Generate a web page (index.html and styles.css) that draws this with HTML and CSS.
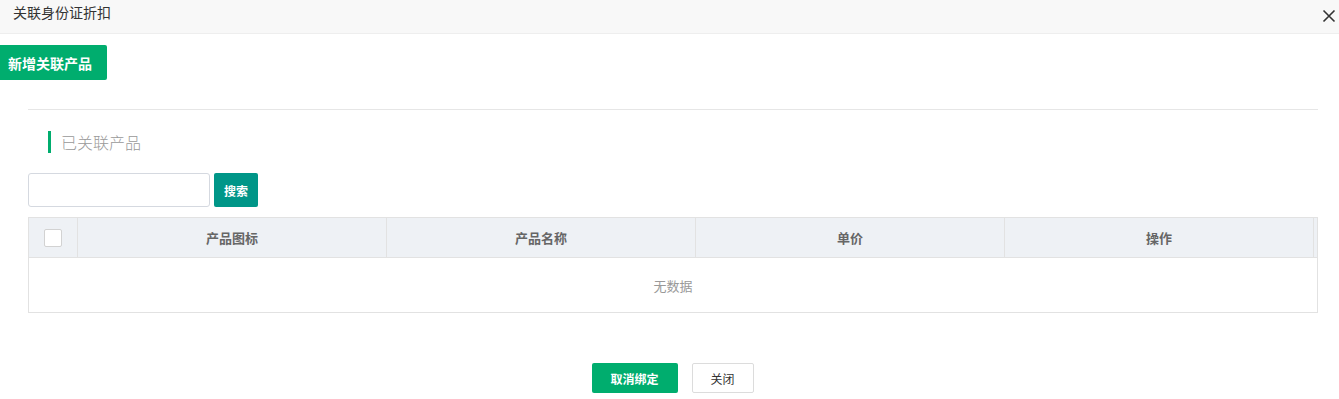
FILE: index.html
```html
<!DOCTYPE html>
<html>
<head>
    <link rel="stylesheet" href="styles.css">
</head>
<body>
    <div class="dialog">
        <div class="dialog-head">
            <span class="dialog-title">关联身份证折扣</span>
            <span class="dialog-close">
                <svg width="14" height="14" viewBox="0 0 14 14"><path d="M1.5 1.5L12.5 12.5M12.5 1.5L1.5 12.5" stroke="#333" stroke-width="1.6" fill="none"/></svg>
            </span>
        </div>

        <div class="dialog-body">
            <button class="btn-add">新增关联产品</button>

            <div class="content">
                <hr class="divider">
                <div class="section-title">已关联产品</div>

                <div class="search-bar">
                    <input type="text" class="search-input">
                    <button class="btn-search">搜索</button>
                </div>

                <div class="table">
                    <div class="table-head">
                        <div class="cell cell-check"><span class="checkbox"></span></div>
                        <div class="cell">产品图标</div>
                        <div class="cell">产品名称</div>
                        <div class="cell">单价</div>
                        <div class="cell">操作</div>
                        <div class="cell-gutter"></div>
                    </div>
                    <div class="table-empty">无数据</div>
                </div>
            </div>

            <div class="footer">
                <button class="btn-unbind">取消绑定</button>
                <button class="btn-close">关闭</button>
            </div>
        </div>
    </div>
</body>
</html>
```

FILE: styles.css
```css
body {
    margin: 0;
    font-family: "Noto Sans CJK SC", "Liberation Sans", sans-serif;
    background: #fff;
    color: #333;
}
.dialog {
    width: 1339px;
}
.dialog-head {
    height: 34px;
    background: #f8f8f8;
    border-bottom: 1px solid #eee;
    box-sizing: border-box;
    display: flex;
    align-items: center;
    justify-content: space-between;
    padding: 0 3px 0 13px;
}
.dialog-title {
    font-size: 14px;
    color: #333;
    margin-top: -10px;
}
.dialog-close {
    display: flex;
    margin-top: -2px;
}
.dialog-body {
    padding-top: 11px;
}
.btn-add {
    background: #00ad6e;
    color: #fff;
    border: none;
    border-radius: 0 2px 2px 0;
    height: 35px;
    width: 107px;
    padding: 0 0 0 8px;
    font-size: 14px;
    font-weight: bold;
    font-family: inherit;
    text-align: left;
    display: block;
}
.content {
    padding: 0 21px 0 28px;
}
.divider {
    border: none;
    border-top: 1px solid #e6e6e6;
    margin: 29px 0 0 0;
}
.section-title {
    margin: 21px 0 0 20px;
    border-left: 3px solid #00ad6e;
    padding-left: 10px;
    height: 22px;
    line-height: 22px;
    font-size: 16px;
    color: #999;
    font-weight: 300;
}
.search-bar {
    display: flex;
    gap: 4px;
    margin-top: 20px;
}
.search-input {
    width: 182px;
    height: 34px;
    box-sizing: border-box;
    border: 1px solid #d5d9e0;
    border-radius: 3px;
    margin: 0;
}
.btn-search {
    background: #009688;
    color: #fff;
    border: none;
    border-radius: 2px;
    width: 44px;
    height: 34px;
    padding: 0;
    font-size: 12px;
    font-weight: bold;
    font-family: inherit;
}
.table {
    margin-top: 10px;
    border: 1px solid #e2e2e2;
}
.table-head {
    display: flex;
    height: 39px;
    background: #eef1f5;
    border-bottom: 1px solid #e2e2e2;
}
.cell {
    width: 309px;
    border-left: 1px solid #e2e2e2;
    display: flex;
    align-items: center;
    justify-content: center;
    font-size: 13px;
    font-weight: bold;
    color: #666;
    box-sizing: border-box;
}
.cell-check {
    width: 48px;
    border-left: none;
}
.checkbox {
    width: 16px;
    height: 16px;
    border: 1px solid #d2d2d2;
    border-radius: 2px;
    background: #fff;
}
.cell-gutter {
    flex: 1;
    border-left: 1px solid #e2e2e2;
}
.table-empty {
    height: 54px;
    display: flex;
    align-items: center;
    justify-content: center;
    font-size: 13px;
    color: #999;
}
.footer {
    display: flex;
    justify-content: center;
    gap: 14px;
    margin-top: 50px;
    padding-left: 6px;
}
.btn-unbind {
    background: #00ad6e;
    color: #fff;
    border: none;
    border-radius: 2px;
    width: 86px;
    height: 30px;
    font-size: 12px;
    font-weight: bold;
    font-family: inherit;
}
.btn-close {
    background: #fff;
    color: #333;
    border: 1px solid #dcdcdc;
    border-radius: 2px;
    width: 62px;
    height: 30px;
    font-size: 12px;
    font-family: inherit;
}
```
